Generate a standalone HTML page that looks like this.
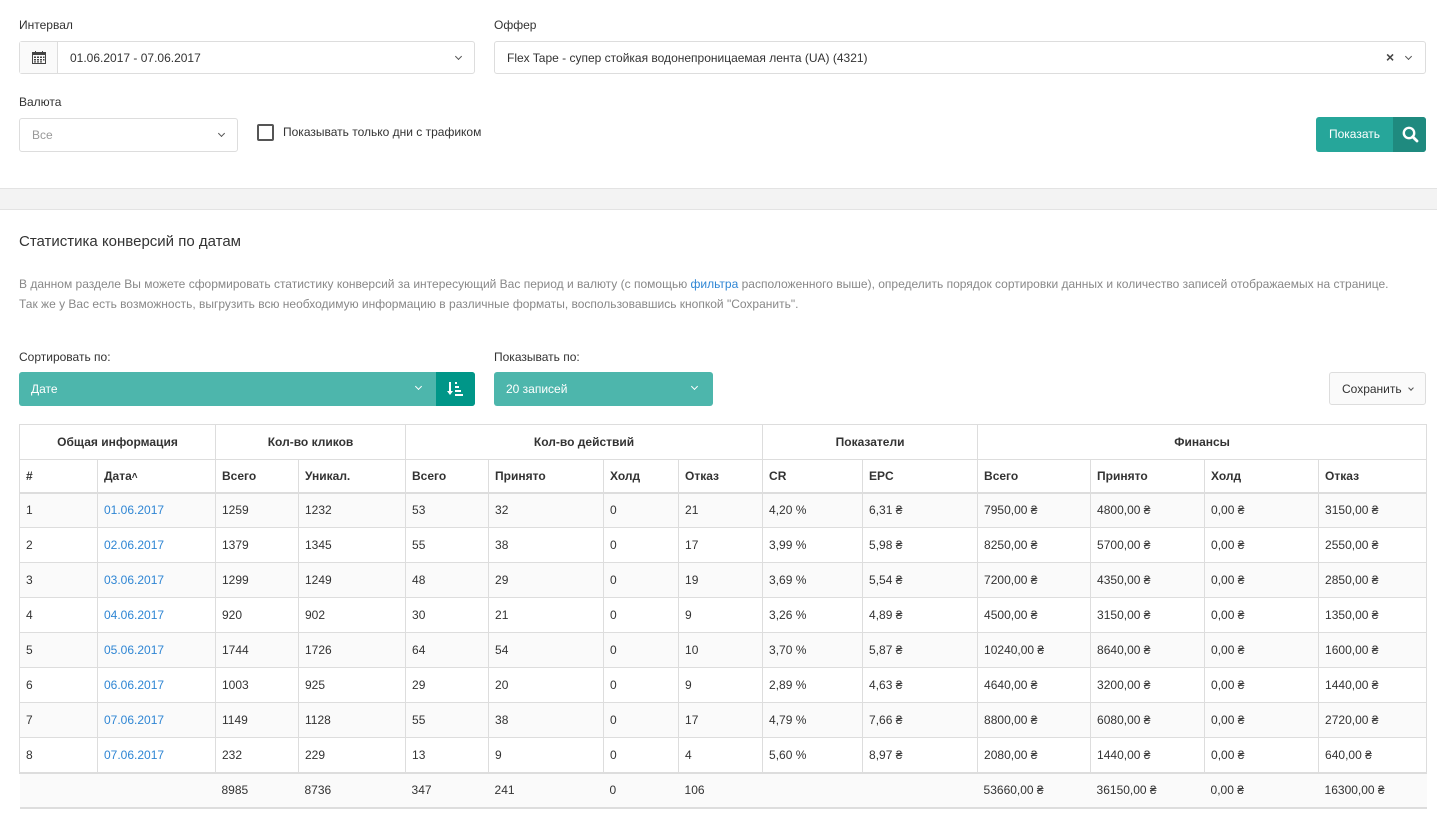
<!DOCTYPE html>
<html><head><meta charset="utf-8"><style>
*{box-sizing:border-box;margin:0;padding:0}
body{width:1437px;height:820px;overflow:hidden;background:#fff;font-family:"Liberation Sans",sans-serif;font-size:12px;color:#333;position:relative}
.a{position:absolute}
.lbl{font-size:12px;color:#333}
.box{border:1px solid #ddd;border-radius:3px;background:#fff}
.chev{position:absolute;width:5px;height:5px;border-right:1.3px solid #555;border-bottom:1.3px solid #555;transform:rotate(45deg)}
table{border-collapse:collapse;position:absolute;left:19px;top:424px;width:1407px;table-layout:fixed}
td,th{border:1px solid #ddd;height:35px;padding:0 6px;text-align:left;font-weight:normal;font-size:12px}
th{font-weight:bold;color:#333}
tr.h1 th{text-align:center;height:35px}
tr.h2 th{border-bottom:2px solid #ddd;height:33px}
tbody tr:nth-child(odd) td{background:#fafafa}
td a{color:#2f86d4;text-decoration:none}
tr.tot td{background:#fafafa;border-top:2px solid #ddd;border-bottom:2px solid #ddd;border-left:none;border-right:none}
</style></head><body>
<div class="a lbl" style="left:19px;top:18px">Интервал</div>
<div class="a box" style="left:19px;top:41px;width:456px;height:33px">
 <div class="a" style="left:0;top:0;width:38px;height:31px;background:#fafafa;border-right:1px solid #ddd"></div>
 <svg class="a" style="left:12px;top:9px" width="14" height="13" viewBox="0 0 14 13"><rect x="0.5" y="1.5" width="13" height="11" fill="none" stroke="#444"/><rect x="0.5" y="1.5" width="13" height="2.5" fill="#444"/><g fill="#444"><rect x="2" y="5.5" width="2" height="1.5"/><rect x="5" y="5.5" width="2" height="1.5"/><rect x="8" y="5.5" width="2" height="1.5"/><rect x="11" y="5.5" width="1.5" height="1.5"/><rect x="2" y="8" width="2" height="1.5"/><rect x="5" y="8" width="2" height="1.5"/><rect x="8" y="8" width="2" height="1.5"/><rect x="11" y="8" width="1.5" height="1.5"/><rect x="2" y="10.3" width="2" height="1.2"/><rect x="5" y="10.3" width="2" height="1.2"/><rect x="8" y="10.3" width="2" height="1.2"/></g><rect x="3" y="0" width="1" height="2" fill="#444"/><rect x="10" y="0" width="1" height="2" fill="#444"/></svg>
 <div class="a" style="left:50px;top:9px">01.06.2017 - 07.06.2017</div>
 <div class="chev" style="left:436px;top:12px"></div>
</div>
<div class="a lbl" style="left:494px;top:18px">Оффер</div>
<div class="a box" style="left:494px;top:41px;width:932px;height:33px">
 <div class="a" style="left:12px;top:9px;white-space:nowrap">Flex Tape - супер стойкая водонепроницаемая лента (UA) (4321)</div>
 <div class="a" style="left:891px;top:7px;font-size:14px;font-weight:bold;color:#444">×</div>
 <div class="chev" style="left:911px;top:12px"></div>
</div>
<div class="a lbl" style="left:19px;top:95px">Валюта</div>
<div class="a box" style="left:19px;top:118px;width:219px;height:34px">
 <div class="a" style="left:12px;top:9px;color:#999">Все</div>
 <div class="chev" style="left:199px;top:12px"></div>
</div>
<div class="a" style="left:257px;top:124px;width:17px;height:17px;border:2px solid #555;border-radius:2px"></div>
<div class="a" style="left:283px;top:125px">Показывать только дни с трафиком</div>
<div class="a" style="left:1316px;top:117px;width:110px;height:35px;border-radius:3px;background:#26a69a;overflow:hidden">
 <div class="a" style="left:0;top:10px;width:77px;text-align:center;color:#fff">Показать</div>
 <div class="a" style="left:77px;top:0;width:33px;height:35px;background:#1f8a7f"></div>
 <svg class="a" style="left:86px;top:9px" width="17" height="17" viewBox="0 0 17 17"><circle cx="7" cy="7" r="5.2" fill="none" stroke="#fff" stroke-width="2.4"/><line x1="10.7" y1="10.7" x2="15" y2="15" stroke="#fff" stroke-width="2.8" stroke-linecap="round"/></svg>
</div>
<div class="a" style="left:0;top:188px;width:1437px;height:22px;background:#f3f3f3;border-top:1px solid #e3e3e3;border-bottom:1px solid #e3e3e3"></div>
<div class="a" style="left:19px;top:233px;font-size:15px;color:#333">Статистика конверсий по датам</div>
<div class="a" style="left:19px;top:274px;width:1385px;color:#888;line-height:20px">В данном разделе Вы можете сформировать статистику конверсий за интересующий Вас период и валюту (с помощью <span style="color:#2f86d4">фильтра</span> расположенного выше), определить порядок сортировки данных и количество записей отображаемых на странице. Так же у Вас есть возможность, выгрузить всю необходимую информацию в различные форматы, воспользовавшись кнопкой "Сохранить".</div>
<div class="a lbl" style="left:19px;top:350px">Сортировать по:</div>
<div class="a" style="left:19px;top:372px;width:456px;height:34px;border-radius:3px;background:#4db6ac;overflow:hidden">
 <div class="a" style="left:12px;top:10px;color:#fff">Дате</div>
 <div class="chev" style="left:397px;top:12px;border-color:#fff"></div>
 <div class="a" style="left:417px;top:0;width:39px;height:34px;background:#009688"></div>
 <svg class="a" style="left:428px;top:9px" width="18" height="16" viewBox="0 0 18 16"><path d="M3 1v11" stroke="#fff" stroke-width="2"/><path d="M0 10l3 4 3-4z" fill="#fff"/><rect x="8" y="1" width="2" height="2" fill="#fff"/><rect x="8" y="5" width="4" height="2" fill="#fff"/><rect x="8" y="9" width="6" height="2" fill="#fff"/><rect x="8" y="13" width="8" height="2" fill="#fff"/></svg>
</div>
<div class="a lbl" style="left:494px;top:350px">Показывать по:</div>
<div class="a" style="left:494px;top:372px;width:219px;height:34px;border-radius:3px;background:#4db6ac">
 <div class="a" style="left:12px;top:10px;color:#fff">20 записей</div>
 <div class="chev" style="left:198px;top:12px;border-color:#fff"></div>
</div>
<div class="a box" style="left:1329px;top:372px;width:97px;height:33px;background:#fafafa">
 <div class="a" style="left:12px;top:9px">Сохранить</div>
 <div class="chev" style="left:79px;top:13px;width:4px;height:4px"></div>
</div>
<table>
<colgroup><col style="width:78px"><col style="width:118px"><col style="width:83px"><col style="width:107px"><col style="width:83px"><col style="width:115px"><col style="width:75px"><col style="width:84px"><col style="width:100px"><col style="width:115px"><col style="width:113px"><col style="width:114px"><col style="width:114px"><col style="width:108px"></colgroup>
<thead>
<tr class="h1"><th colspan="2">Общая информация</th><th colspan="2">Кол-во кликов</th><th colspan="4">Кол-во действий</th><th colspan="2">Показатели</th><th colspan="4">Финансы</th></tr>
<tr class="h2"><th>#</th><th>Дата<span style="font-size:10px;vertical-align:1px">&#x2C4;</span></th><th>Всего</th><th>Уникал.</th><th>Всего</th><th>Принято</th><th>Холд</th><th>Отказ</th><th>CR</th><th>EPC</th><th>Всего</th><th>Принято</th><th>Холд</th><th>Отказ</th></tr>
</thead>
<tbody>
<tr><td>1</td><td><a>01.06.2017</a></td><td>1259</td><td>1232</td><td>53</td><td>32</td><td>0</td><td>21</td><td>4,20 %</td><td>6,31 ₴</td><td>7950,00 ₴</td><td>4800,00 ₴</td><td>0,00 ₴</td><td>3150,00 ₴</td></tr>
<tr><td>2</td><td><a>02.06.2017</a></td><td>1379</td><td>1345</td><td>55</td><td>38</td><td>0</td><td>17</td><td>3,99 %</td><td>5,98 ₴</td><td>8250,00 ₴</td><td>5700,00 ₴</td><td>0,00 ₴</td><td>2550,00 ₴</td></tr>
<tr><td>3</td><td><a>03.06.2017</a></td><td>1299</td><td>1249</td><td>48</td><td>29</td><td>0</td><td>19</td><td>3,69 %</td><td>5,54 ₴</td><td>7200,00 ₴</td><td>4350,00 ₴</td><td>0,00 ₴</td><td>2850,00 ₴</td></tr>
<tr><td>4</td><td><a>04.06.2017</a></td><td>920</td><td>902</td><td>30</td><td>21</td><td>0</td><td>9</td><td>3,26 %</td><td>4,89 ₴</td><td>4500,00 ₴</td><td>3150,00 ₴</td><td>0,00 ₴</td><td>1350,00 ₴</td></tr>
<tr><td>5</td><td><a>05.06.2017</a></td><td>1744</td><td>1726</td><td>64</td><td>54</td><td>0</td><td>10</td><td>3,70 %</td><td>5,87 ₴</td><td>10240,00 ₴</td><td>8640,00 ₴</td><td>0,00 ₴</td><td>1600,00 ₴</td></tr>
<tr><td>6</td><td><a>06.06.2017</a></td><td>1003</td><td>925</td><td>29</td><td>20</td><td>0</td><td>9</td><td>2,89 %</td><td>4,63 ₴</td><td>4640,00 ₴</td><td>3200,00 ₴</td><td>0,00 ₴</td><td>1440,00 ₴</td></tr>
<tr><td>7</td><td><a>07.06.2017</a></td><td>1149</td><td>1128</td><td>55</td><td>38</td><td>0</td><td>17</td><td>4,79 %</td><td>7,66 ₴</td><td>8800,00 ₴</td><td>6080,00 ₴</td><td>0,00 ₴</td><td>2720,00 ₴</td></tr>
<tr><td>8</td><td><a>07.06.2017</a></td><td>232</td><td>229</td><td>13</td><td>9</td><td>0</td><td>4</td><td>5,60 %</td><td>8,97 ₴</td><td>2080,00 ₴</td><td>1440,00 ₴</td><td>0,00 ₴</td><td>640,00 ₴</td></tr>
<tr class="tot"><td></td><td></td><td>8985</td><td>8736</td><td>347</td><td>241</td><td>0</td><td>106</td><td></td><td></td><td>53660,00 ₴</td><td>36150,00 ₴</td><td>0,00 ₴</td><td>16300,00 ₴</td></tr>
</tbody>
</table>
</body></html>
